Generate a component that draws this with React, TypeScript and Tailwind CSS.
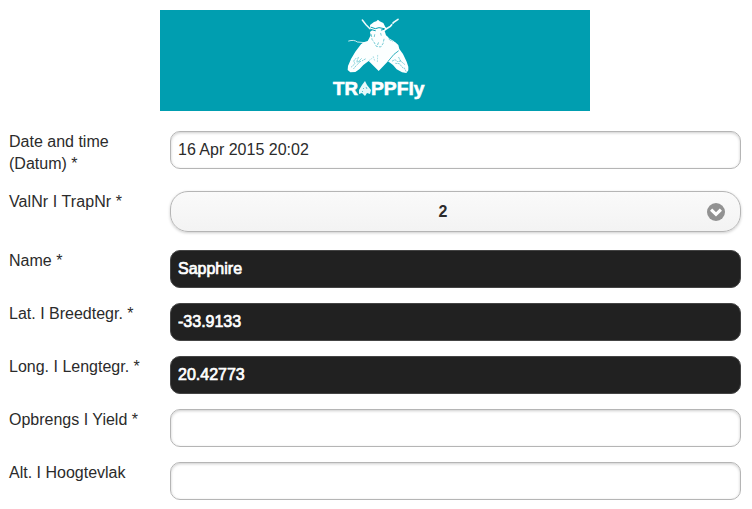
function Logo() {
  return (
    <svg viewBox="0 0 430 101" className="block h-[101px] w-[430px]" role="img" aria-label="TRAPPFly">
      <rect width="430" height="101" fill="#009eb0" />
      <g transform="translate(175 0) scale(.33333)">
        <g fill="none" stroke="#effafa" strokeLinecap="round">
          <path d="M82 30L93 44L105 56" strokeWidth="4.5" />
          <path d="M189 28L176 37L166 49L150 59" strokeWidth="5" strokeDasharray="19 6" />
          <path d="M41 93Q57 88 67 96L89 98" strokeWidth="2.5" />
          <path d="M148 88L161 86L177 95" strokeWidth="3" />
        </g>
        <path fill="#fcffff" d="M105 45L117 36L124 34L129 29L134 34L145 39L151 51L157 57L149 63L153 76L160 82L162 89L172 94L181 97L190 105L193 117L204 132L215 155L220 170L220 181L214 189L201 187L185 178L174 165L159 154L131 183L101 153L85 165L73 178L61 186L46 187L38 180L39 168L48 147L61 125L78 103L86 97L98 93L103 84L107 76L105 66L112 60L106 55Z" />
        <g fill="none" stroke="#009eb0" strokeLinecap="round">
          <path d="M109 52L121 56L132 53L148 56" strokeWidth="3" />
          <path d="M110 59L121 62M139 60L147 58" strokeWidth="3" />
          <path d="M109 74L111 88L118 98L124 109L137 111L144 101L148 83M119 74L117 85M137 70L140 81M128 104L131 96" strokeWidth="1.6" strokeDasharray="6 6" />
          <path d="M190 123L177 133L160 153" strokeWidth="2.4" />
          <path d="M103 151L111 145M115 140L119 152M128 136L127 159" strokeWidth="1" strokeDasharray="3 5" />
          <path d="M63 145L56 153L60 161L49 171M70 142L65 156L77 154L66 164L56 176M79 146L72 153M91 147L82 152M172 153L180 149L188 155L198 153M182 160L193 161L204 174M191 142L197 153L211 165M208 174L213 184" strokeWidth="1.4" strokeDasharray="4 4" />
        </g>
      </g>
      <g fill="#ffffff" stroke="#ffffff" strokeWidth=".6" fontFamily="Liberation Sans, Arial, sans-serif" fontWeight="700" fontSize="18.5">
        <text x="173" y="85" textLength="25" lengthAdjust="spacingAndGlyphs">TR</text>
        <text x="211" y="85" textLength="53.5" lengthAdjust="spacingAndGlyphs">PPFly</text>
      </g>
      <path d="M205 71L207 75L211 80L210 84L207 83L205 86L202 83L199 84L199 80L202 75Z" fill="#e7f8f9" />
      <path d="M203 78l1 1M206 77l1 2M202 82l1-1" stroke="#009eb0" strokeWidth=".6" fill="none" />
    </svg>
  );
}

const fieldBase = "h-[38px] w-full rounded-[10px] border px-[7px] text-[16px] leading-[22px] outline-none";
const light = "border-[#b5b5b5] bg-white text-[#2b2b2b] shadow-[inset_0_1px_3px_rgba(0,0,0,0.2)]";
const dark = "border-[#444444] bg-[#212121] text-white [-webkit-text-stroke:0.7px_white]";

function Field({ label, value = "", filled = false }: { label: string; value?: string; filled?: boolean }) {
  return (
    <label className="flex items-start">
      <span className="w-[161px] shrink-0 pr-5">{label}</span>
      <input className={`${fieldBase} ${filled ? dark : light}`} defaultValue={value} />
    </label>
  );
}

export default function App() {
  return (
    <main className="h-[509px] w-[752px] overflow-hidden bg-white pt-[10px] font-['Liberation_Sans',Arial,sans-serif] text-[16px] leading-[22px] text-[#2b2b2b]">
      <header className="flex justify-center pr-[2px]">
        <Logo />
      </header>
      <form className="pt-5 pr-[11px] pl-[9px]">
        <Field label="Date and time (Datum) *" value="16 Apr 2015 20:02" />
        <div className="mt-4 mb-[18px] flex items-start">
          <span className="w-[161px] shrink-0 tracking-[0.08px]">ValNr I TrapNr *</span>
          <button type="button" className="flex h-[41px] flex-1 items-center rounded-[18px] border border-[#b5b5b5] bg-linear-to-b from-[#fafafa] to-[#f3f3f3] pr-[15px] pl-[8px] font-bold shadow-[0_1px_3px_rgba(0,0,0,0.2)]">
            <span className="flex-1 text-center">2</span>
            <svg viewBox="0 0 18 18" className="size-[18px]" aria-hidden="true">
              <circle cx="9" cy="9" r="9" fill="#929292" />
              <path d="M4.1 6.7L9 11.3L13.9 6.7" fill="none" stroke="white" strokeWidth="3.2" />
            </svg>
          </button>
        </div>
        <div className="flex flex-col gap-[15px]">
          <Field label="Name *" value="Sapphire" filled />
          <Field label="Lat. I Breedtegr. *" value="-33.9133" filled />
          <Field label="Long. I Lengtegr. *" value="20.42773" filled />
          <Field label="Opbrengs I Yield *" />
          <Field label="Alt. I Hoogtevlak" />
        </div>
      </form>
    </main>
  );
}
